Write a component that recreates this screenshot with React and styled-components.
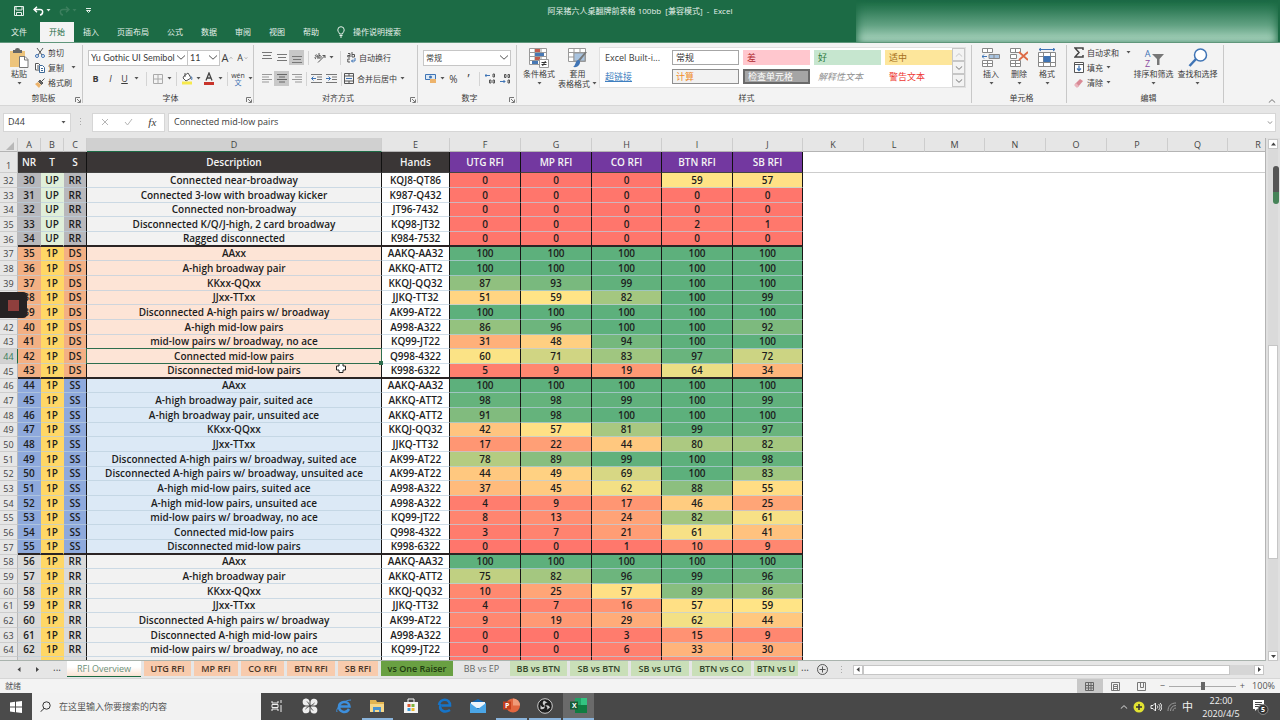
import React, { useState } from 'react';
import styled, { createGlobalStyle, css } from 'styled-components';

const GlobalStyle = createGlobalStyle`
    * {
        box-sizing: border-box;
    }
    body {
        margin: 0;
        overflow: hidden;
        font-family: 'Open Sans', 'Noto Sans CJK SC', sans-serif;
        font-size: 8px;
        line-height: 12px;
        color: #3b3b3b;
    }
    button, input, select {
        font: inherit;
        color: inherit;
        margin: 0;
        padding: 0;
        border: none;
        border-radius: 0;
        background: none;
    }
    svg {
        display: block;
        flex: none;
    }
`;

const Window = styled.div`
    display: flex;
    flex-direction: column;
    height: 100vh;
    background: #e6e6e6;
`;

/* title bar and ribbon tabs */

const Header = styled.header`
    position: relative;
    background: #1c6b45;
    border-bottom: 1px solid #5f967b;
    color: #e6f1eb;
`;
const TitleBar = styled.div`
    display: grid;
    grid-template-columns: 1fr auto 1fr;
    align-items: center;
    height: 21px;
    margin-bottom: 1px;
`;
const QuickAccess = styled.div`
    display: flex;
    align-items: center;
    gap: 8px;
    padding-left: 13px;
`;
const Title = styled.h1`
    margin: 0;
    font-size: 8px;
    font-weight: 400;
    white-space: pre;
`;
const PlainButton = styled.button`
    display: flex;
    align-items: center;
    gap: 2px;
    white-space: nowrap;
`;
const TabRow = styled.nav`
    display: flex;
    height: 20px;
    padding-left: 2px;
`;
const RibbonTab = styled.button`
    display: flex;
    align-items: center;
    gap: 8px;
    padding: 0 9px;
    white-space: nowrap;
    ${p => p.$file && css`margin-right: 4px;`}
    ${p => p.$active && css`
        background: #f3f3f3;
        color: #1c6b45;
    `}
`;
const Haze = styled.div`
    position: absolute;
    top: 0;
    right: 2px;
    bottom: 0;
    width: 33%;
    background: linear-gradient(#1c6b45 2%, #2d7a55 20%, #62a283 60%, #a4d0ba 94%);
    box-shadow: inset 5px 0 8px -4px #1c6b45, inset -5px 0 8px -4px #1c6b45;
`;

/* ribbon */

const Ribbon = styled.section`
    display: flex;
    height: 63px;
    padding-top: 2px;
    background: #f3f3f3;
    border-bottom: 1px solid #d6d6d6;
`;
const Group = styled.div`
    display: flex;
    flex-direction: column;
    width: ${p => p.$width}px;
    padding-left: ${p => p.$pad || 5}px;
    border-right: 1px solid #c8c8c8;
    margin-bottom: 2px;
    flex: none;
`;
const GroupBody = styled.div`
    display: flex;
    flex: 1;
    gap: ${p => p.$gap || 0}px;
`;
const GroupFooter = styled.div`
    display: flex;
    align-items: center;
    justify-content: center;
    height: 10px;
    position: relative;
`;
const Launcher = styled.button`
    position: absolute;
    right: 1px;
    bottom: 0;
`;
const BigButton = styled.button`
    display: flex;
    flex-direction: column;
    align-items: center;
    width: ${p => p.$width || 28}px;
    padding-top: 3px;
    line-height: 10px;
    white-space: nowrap;
    svg {
        margin-bottom: 1px;
    }
    svg + svg, span + svg {
        margin-top: 3px;
    }
`;
const Stack = styled.div`
    display: flex;
    flex-direction: column;
`;
const SmallButton = styled.button`
    display: flex;
    align-items: center;
    gap: 3px;
    height: 15px;
    white-space: nowrap;
    svg:last-child {
        margin-left: ${p => p.$caret || 0}px;
    }
`;
const ToolLine = styled.div`
    display: flex;
    align-items: center;
    height: 21px;
    margin-top: ${p => (p.$first ? 2 : 0)}px;
`;
const Tool = styled.button`
    display: flex;
    align-items: center;
    justify-content: center;
    gap: ${p => p.$gap || 3}px;
    width: ${p => p.$width || 15}px;
    height: 15px;
    font-size: ${p => p.$size || 9}px;
    white-space: nowrap;
    ${p => p.$on && css`background: #c8c8c8;`}
`;
const Phonetic = styled.span`
    display: grid;
    font-size: 7px;
    line-height: 7px;
    text-align: center;
    span + span {
        color: #3f74b5;
    }
`;
const Divider = styled.span`
    width: 1px;
    height: 14px;
    margin: 0 ${p => p.$gap || 4}px;
    background: #d4d4d4;
`;
const SelectBox = styled.label`
    display: flex;
    align-items: center;
    position: relative;
    width: ${p => p.$width}px;
    height: 16px;
    border: 1px solid #c6c6c6;
    background: #fff;
    & + & {
        margin-left: -1px;
    }
    select {
        appearance: none;
        width: 100%;
        height: 14px;
        padding: 0 12px 0 2px;
        font-family: Lato, 'Noto Sans CJK SC', sans-serif;
        font-size: ${p => p.$size || 9}px;
        line-height: 14px;
        outline: none;
    }
    svg {
        position: absolute;
        right: 1px;
        pointer-events: none;
    }
`;
const Gallery = styled.div`
    display: flex;
    height: 41px;
    margin-top: 2px;
    background: #fff;
    border: 1px solid #e1e1e1;
`;
const GalleryGrid = styled.div`
    display: grid;
    grid-template-columns: repeat(5, 67px);
    grid-auto-rows: 15px;
    gap: 4px;
    padding: 2px 0 0 1px;
`;
const StyleCell = styled.button`
    display: flex;
    align-items: center;
    padding-left: 3px;
    font-size: 9px;
    line-height: 11px;
    white-space: nowrap;
    color: ${p => p.$color || '#3b3b3b'};
    background: ${p => p.$fill || '#fff'};
    border: ${p => p.$border || '1px solid transparent'};
    font-style: ${p => (p.$italic ? 'italic' : 'normal')};
    text-decoration: ${p => (p.$link ? 'underline' : 'none')};
`;
const GalleryScroll = styled.div`
    display: grid;
    grid-template-rows: 1fr 1fr 1fr;
    width: 13px;
    button {
        display: grid;
        place-items: center;
        border: 1px solid #c6c6c6;
        background: #f3f3f3;
    }
`;
const Collapse = styled.button`
    margin: auto 4px 0 auto;
    padding-bottom: 2px;
`;

/* formula bar */

const FormulaBar = styled.div`
    display: flex;
    align-items: center;
    height: 32px;
    padding: 0 4px 0 3px;
`;
const NameBox = styled.label`
    display: flex;
    align-items: center;
    width: 68px;
    height: 19px;
    padding: 0 4px;
    background: #fff;
    border: 1px solid #d6d6d6;
    font-size: 9px;
    input {
        flex: 1;
        width: 0;
        outline: none;
    }
`;
const FormulaTools = styled.div`
    display: flex;
    align-items: center;
    justify-content: space-around;
    width: 73px;
    height: 19px;
    margin: 0 3px 0 9px;
    background: #fff;
    border: 1px solid #d6d6d6;
`;
const FunctionMark = styled.i`
    font-family: 'Liberation Serif', serif;
    font-size: 11px;
`;
const FormulaBox = styled(NameBox)`
    flex: 1;
    width: auto;
    padding: 0 2px 0 5px;
`;

/* sheet */

const SheetArea = styled.div`
    display: flex;
    flex: 1;
    min-height: 0;
`;
const SheetView = styled.main`
    flex: 1;
    min-width: 0;
    overflow: hidden;
    position: relative;
    background: #fff;
    border-right: 1px solid #b4b4b4;
    border-bottom: 1px solid #a9b3ad;
`;
const Grid = styled.table`
    table-layout: fixed;
    width: 1px;
    border-collapse: separate;
    border-spacing: 0;
    font-size: 10px;
    font-weight: 600;
    line-height: 13px;
    text-align: center;
    color: #1d1d1d;
    th, td {
        padding: 0;
        white-space: nowrap;
    }
    tbody tr {
        height: 15px;
    }
    tbody tr:nth-child(3n) {
        height: 14px;
    }
`;
const ColumnHead = styled.th`
    height: 14px;
    font-size: 9px;
    font-weight: 400;
    line-height: 13px;
    color: #444;
    background: ${p => (p.$selected ? '#d0d0d0' : '#e6e6e6')};
    border-right: 1px solid #cdcdcd;
    border-bottom: 1px solid ${p => (p.$selected ? '#1c6b45' : '#b4b4b4')};
`;
const RowHead = styled.th`
    font-size: 9px;
    font-weight: 400;
    color: ${p => (p.$selected ? '#3b7d5b' : '#444')};
    background: ${p => (p.$selected ? '#d2d2d2' : '#e6e6e6')};
    border-right: 1px solid ${p => (p.$selected ? '#1c6b45' : '#b9b9b9')};
    border-bottom: 1px solid #cdcdcd;
    vertical-align: ${p => (p.$frozen ? 'bottom' : 'middle')};
`;
const TitleCell = styled.td`
    height: 21px;
    color: #f4f4f4;
    background: ${p => p.$fill};
    border-right: 1px solid ${p => (p.$line ? '#111' : p.$fill)};
    border-bottom: 1px solid #444;
`;
const BlankTitle = styled.td`
    border-bottom: 1px solid #cdcdcd;
`;
const Cell = styled.td`
    position: relative;
    background: ${p => p.$fill};
    border-right: 1px solid ${p => (p.$line ? '#161616' : p.$fill)};
    border-bottom: ${p => (p.$last ? '2px solid #2b2424' : '1px solid rgba(186, 206, 222, 0.7)')};
`;
const Selection = styled.span`
    position: absolute;
    z-index: 1;
    inset: -1px;
    border: 1px solid #2e6e4e;
    &::after {
        content: '';
        position: absolute;
        right: -2px;
        bottom: -2px;
        width: 4px;
        height: 4px;
        background: #2e6e4e;
    }
`;
const Pointer = styled.svg`
    position: absolute;
    left: 335px;
    top: 224px;
`;
const Recorder = styled.button`
    position: absolute;
    left: 0;
    top: 292px;
    display: flex;
    align-items: center;
    padding-left: 8px;
    width: 27px;
    height: 26px;
    background: #262223;
    border-radius: 0 4px 4px 0;
    &::before {
        content: '';
        width: 11px;
        height: 11px;
        background: #8f3f3d;
    }
`;
const VScroll = styled.div`
    display: flex;
    flex-direction: column;
    width: 14px;
    padding: 1px 2px 0;
    background: #e0e0e0;
    position: relative;
`;
const ScrollButton = styled.button`
    display: grid;
    place-items: center;
    flex: none;
    width: 10px;
    height: 10px;
    background: #fff;
    border: 1px solid #c6c6c6;
`;
const VTrack = styled.div`
    display: grid;
    grid-template-rows: 196px 214px;
    flex: 1;
    background: #dadada;
    &::after {
        content: '';
        grid-row: 2;
        background: #fff;
        border: 1px solid #c6c6c6;
    }
`;
const Meter = styled.span`
    position: absolute;
    right: 1px;
    top: 28px;
    width: 6px;
    height: 38px;
    border-radius: 3px;
    background: linear-gradient(#555 68%, #468358 68%);
`;

/* sheet tabs */

const SheetBar = styled.div`
    display: flex;
    align-items: center;
    height: 18px;
    border-bottom: 1px solid #d6d6d6;
    color: #444;
`;
const SheetNav = styled.div`
    display: flex;
    align-items: center;
    justify-content: space-between;
    width: 67px;
    padding: 0 6px 0 17px;
`;
const Dots = styled.button`
    font-size: 10px;
    line-height: 6px;
    padding-bottom: 6px;
`;
const SheetTabs = styled.div`
    display: flex;
    gap: 3px;
    width: 728px;
    height: 17px;
`;
const SheetTab = styled.button`
    flex: none;
    width: ${p => p.$width}px;
    height: 15px;
    font-size: 9px;
    font-weight: ${p => (p.$active || !p.$fill ? 400 : 600)};
    line-height: 14px;
    color: ${p => p.$color || '#4a3527'};
    background: ${p => p.$fill || 'transparent'};
    white-space: nowrap;
    ${p => p.$active && css`
        height: 16px;
        background: linear-gradient(#fff 40%, #fbe3d3);
        border-bottom: 1px solid #1c6b45;
    `}
`;
const SheetExtras = styled.div`
    display: flex;
    align-items: center;
    gap: 8px;
    width: 58px;
    padding-left: 6px;
`;
const HScroll = styled.div`
    display: flex;
    align-items: center;
    flex: 1;
    margin-right: 16px;
    background: #d6d6d6;
`;
const HThumb = styled.div`
    flex: 1;
    height: 10px;
    margin-right: 24px;
    background: #fff;
    border: 1px solid #c6c6c6;
`;

const StatusBar = styled.footer`
    display: flex;
    align-items: center;
    height: 14px;
    padding: 0 5px;
    background: #f3f3f3;
    color: #555;
`;
const ViewButton = styled.button`
    display: grid;
    place-items: center;
    width: 26px;
    height: 14px;
    background: ${p => (p.$on ? '#c8c8c8' : 'none')};
    ${p => p.$push && css`margin-left: auto;`}
`;
const Zoom = styled.label`
    display: flex;
    align-items: center;
    gap: 4px;
    margin-left: 5px;
    font-size: 9px;
    input {
        appearance: none;
        width: 67px;
        height: 8px;
        background: linear-gradient(#ababab, #ababab) center / 100% 1px no-repeat;
    }
    input::-webkit-slider-thumb {
        appearance: none;
        width: 4px;
        height: 8px;
        background: #666;
    }
`;
const Percent = styled.span`
    width: 26px;
    text-align: right;
`;

/* taskbar */

const Taskbar = styled.footer`
    display: flex;
    height: 27px;
    background: #484848;
    color: #f2f2f2;
`;
const StartButton = styled.button`
    display: grid;
    place-items: center;
    width: 32px;
    background: #4b4b4b;
`;
const SearchBox = styled.label`
    display: flex;
    align-items: center;
    gap: 8px;
    width: 229px;
    padding-left: 8px;
    background: #f2f2f2;
    color: #444;
    font-size: 9px;
    input {
        flex: 1;
        outline: none;
    }
    input::placeholder {
        color: #555;
        opacity: 1;
    }
`;
const Apps = styled.div`
    display: grid;
    grid-template-columns: repeat(10, 1fr);
    width: 335px;
    margin-right: auto;
`;
const AppButton = styled.button`
    display: grid;
    place-items: center;
    margin-right: 2px;
    border-bottom: 2px solid ${p => (p.$open ? '#8ab4dc' : 'transparent')};
    background: ${p => (p.$active ? '#6a6a6a' : 'none')};
`;
const Tray = styled.div`
    display: flex;
    align-items: center;
    gap: 5px;
    padding-right: 11px;
    font-size: 11px;
`;
const Clock = styled.time`
    width: 46px;
    margin-right: 3px;
    font-size: 9px;
    line-height: 13px;
    text-align: center;
    white-space: pre-line;
`;

/* icons */

const Icon = ({ w = 14, h = w, vw = w, vh = h, stroke = '#555', fill = 'none', children }) => (
    <svg width={w} height={h} viewBox={`0 0 ${vw} ${vh}`} fill={fill} stroke={stroke} strokeWidth="1">{children}</svg>
);
const Caret = ({ color = '#555' }) => <Icon w={5} h={3} stroke="none" fill={color}><path d="M.5 0h4L2.500 2.500z" /></Icon>;
const Chevron = ({ up, w = 10, color }) => (
    <Icon w={w} h={w / 2} vw={10} vh={5} stroke={color}><path d={up ? 'M1 4.500 5 .8l4 3.700' : 'M1 .5l4 3.700L9 .5'} /></Icon>
);
const LaunchIcon = () => <Icon w={6} stroke="#777"><path d="M.5 5V.5H5M2 2l3 3M5.500 2.500v3h-3" /></Icon>;
const SaveIcon = () => <Icon w={12} h={12} stroke="#e6f1eb"><path d="M1.500 1.500h9v9h-9zM3 1.500v3.500h6V1.500M3.500 10.500v-3h5v3" /></Icon>;
const UndoIcon = ({ flip }) => (
    <svg width="11" height="10" viewBox="0 0 11 10" fill="none" stroke={flip ? '#3c7f5e' : '#fff'} strokeWidth="1.5">
        <path d={flip ? 'M7 .8l3 2.700-3 2.700M10 3.500H4C0 3.500 1 8.500 4 9' : 'M4 .8 1 3.500l3 2.700M1 3.500h6c4 0 3 5 0 5.500'} />
    </svg>
);
const BulbIcon = () => <Icon w={8} h={12} stroke="#e6f1eb"><path d="M2.500 8C2.500 6.500.8 6 .8 3.900a3.200 3.200 0 0 1 6.400 0C7.200 6 5.500 6.500 5.500 8zM2.500 9.500h3M3 11h2" /></Icon>;
const PasteIcon = () => (
    <Icon w={20} h={20} stroke="none">
        <path d="M1 3h15v16H1z" fill="#edc47c" /><path d="M4 2h2a2.500 2 0 0 1 5 0h2v3H4z" fill="#666" />
        <path d="M10.500 8.500h5.500l3 3v8h-8.500z" fill="#fff" stroke="#777" /><path d="M15.500 8.500v3.500H19" stroke="#777" fill="none" />
    </Icon>
);
const CutIcon = () => (
    <Icon w={10} h={10}><path d="M2 0l5 7M8 0L3 7" /><circle cx="2" cy="8" r="1.500" stroke="#3f74b5" /><circle cx="8" cy="8" r="1.500" stroke="#3f74b5" /></Icon>
);
const CopyIcon = () => <Icon w={10} h={10}><path d="M.5.5h3l2 2V7h-5zM2 3h2M2 5h2" fill="#fff" /><path d="M4.500 2.500h3l2 2v5h-5zM6 5.500h2M6 7.500h2" fill="#fff" stroke="#3f6a98" /></Icon>;
const BrushIcon = () => <Icon w={10} h={10}><path d="M0 6l3-2 3 3-2 3z" fill="#edb36b" stroke="none" /><path d="M3.500 3.500l3 3L8 5 5 2zM6.500 3.500L9.500.5" fill="#666" /></Icon>;
const BordersIcon = () => <Icon w={10} h={10} stroke="#aaa"><path d="M.5.5h9v9h-9zM5 .5v9M.5 5h9" /></Icon>;
const FillIcon = () => (
    <Icon w={12} h={13}><path d="M3 4l4-3 3 5-5 3-3-3zM4 1v4" fill="#fff" /><path d="M9.500 4c2 1 1.500 3 1 4" stroke="#3f74b5" /><path d="M1 9.500h10v3H1z" fill="#f7e94c" stroke="none" /></Icon>
);
const ColorIcon = () => <Icon w={12} h={13}><path d="M3 8.500L6 1l3 7.500M4 6h4" stroke="#444" strokeWidth="1.300" /><path d="M1 10h10v3H1z" fill="#c8342b" stroke="none" /></Icon>;
const AlignIcon = ({ kind = 'left', dim }) => {
    const x = { left: 0, center: 2, right: 3 }[kind];
    return <Icon w={10} h={9} stroke={dim ? '#999' : '#666'}><path d={`M0 .5h10M${x} 3h${kind === 'center' ? 6 : 7}M0 5.500h10M${x} 8h${kind === 'center' ? 6 : 7}`} /></Icon>;
};
const BarsIcon = ({ shift = 0 }) => <Icon w={10} h={12} stroke="#777"><path d={`M0 ${shift + 0.5}h10M1 ${shift + 3.5}h8M0 ${shift + 6.5}h10`} /></Icon>;
const OrientIcon = () => <Icon w={12} h={11}><path d="M1 4c1-2 3-1 3 1v2M4 5c-3-1-4 1-2 2M5 1v5c3 1 3-3 0-2.500M4 10.500L11 3.500M11 3.500v2.500M11 3.500H8.500" /></Icon>;
const IndentIcon = ({ flip }) => <Icon w={11} h={9} stroke="#777"><path d="M0 .5h11M6 3h5M6 5.500h5M0 8.500h11" /><path d={flip ? 'M0 4.500h4.500M2.500 2.500l2 2-2 2' : 'M5 4.500H.5M2.500 2.500l-2 2 2 2'} stroke="#3f74b5" /></Icon>;
const WrapIcon = () => <Icon w={9} h={11}><path d="M.5 3.500h2.500v-2H1M3 3.500v1.500H.8v-1.500M5 0v5h2.500V2.500H5M3 7H.8v3H3" /><path d="M8 6v3H4.500M6 7.500L4.500 9 6 10.500" stroke="#3f74b5" /></Icon>;
const MergeIcon = () => <Icon w={10} h={11}><path d="M.5.5h9v10h-9zM.5 3h9M.5 8h9M5 .5V3M5 8v2.500" /><path d="M2 5.500h6" stroke="#3f74b5" /></Icon>;
const MoneyIcon = () => <Icon w={12} h={11} stroke="none"><path d="M.5 1.500h10v5H.5z" fill="#dce9f5" stroke="#3f74b5" /><circle cx="5.500" cy="4" r="1.500" fill="#3f74b5" /><path d="M5 6h6v4H5z" fill="#edb36b" /></Icon>;
const DecimalIcon = ({ flip }) => (
    <Icon w={11} h={11}><path d={flip ? 'M0 8.500h5M3.500 7l1.500 1.500L3.500 10' : 'M0 2.500h5M1.500 1L0 2.500 1.500 4'} stroke="#3f74b5" /><path d={flip ? 'M4.500 1.500h1.500v3H4.500zM8 1.500h1.500v3H8zM8 7h1.500v3H8z' : 'M8 1h1.500v3H8zM4.500 7H6v3H4.500zM8 7h1.500v3H8z'} /></Icon>
);
const CondIcon = () => (
    <Icon w={20} h={20} stroke="#999"><path d="M.5.5h17v16H.5zM.5 4.500h17M.5 8.500h17M.5 12.500h17M6 .5v16M12 .5v16" fill="#fff" />
        <path d="M6 1h5v3H6zM6 9h5v3H6z" fill="#c25b4c" stroke="none" /><path d="M6 5h9v3H6zM3 13h6v3H3z" fill="#4778b4" stroke="none" />
        <path d="M10.500 11.500h9v8h-9z" fill="#fff" /><path d="M12.500 14.500h5M12.500 16.500h5M16.500 13l-3 5" stroke="#333" /></Icon>
);
const TableIcon = () => (
    <Icon w={20} h={20} stroke="#999"><path d="M.5.5h17v13H.5zM.5 4.500h17M.5 9h17M6 .5v13M12 .5v13" fill="#fff" /><path d="M6 5h11v8H6z" fill="#a8c3df" />
        <path d="M19 4l-7 9-2-1 7-8z" fill="#777" stroke="none" /><path d="M10 12c2 0 3 2 1 5-2 3-5 2-6 2 3-2 2-6 5-7z" fill="#3f74b5" stroke="none" /></Icon>
);
const CellsIcon = ({ kind }) => (
    <Icon w={18} h={20} stroke="#888">
        {kind === 'format' ? (
            <><path d="M.5 4.500h17v14H.5zM.5 8.500h17M.5 14.500h17M5.500 4.500v14M12.500 4.500v14" fill="#fff" /><path d="M5.500 8h7v6h-7z" fill="#3f74b5" stroke="none" /><path d="M1 1.500h16M3 0L1 1.500 3 3M15 0l2 1.500L15 3" stroke="#3f74b5" /></>
        ) : (
            <><path d="M.5.500h10v4H.5zM5.500.5v4M.5 12.500h10v6H.5zM5.500 12.500v6M.5 15.500h10" fill="#fff" />
                {kind === 'insert' ? <><path d="M7 6.500h10.500v4H7zM12 6.500v4" fill="#a8c3df" /><path d="M5 8.500H0M2 6.500l-2 2 2 2" stroke="#3f74b5" /></> : <><path d="M.5 6.500h6v4h-6z" fill="#fff" /><path d="M9 4l9 8M18 4l-9 8" stroke="#dd6a45" strokeWidth="1.800" /></>}</>
        )}
    </Icon>
);
const SumIcon = () => <Icon w={10} h={11} stroke="#444"><path d="M9 3V1H1l4 4.500L1 10h8V8" strokeWidth="1.500" /></Icon>;
const FillDownIcon = () => <Icon w={10} h={11}><path d="M.5.5h9v10h-9zM.5 2.500h9" fill="#fff" /><path d="M5 3.500v5M3 6.500l2 2 2-2" stroke="#3f74b5" strokeWidth="1.300" /></Icon>;
const EraserIcon = () => <Icon w={10} h={10} stroke="none"><path d="M1 6l5-5 3 2-5 6-3-1z" fill="#d98a96" /><path d="M0 7l2-2 3 3-2 2z" fill="#e9b5bd" /></Icon>;
const SortBox = styled.span`
    display: grid;
    grid-template-columns: 8px 12px;
    align-items: center;
    height: 21px;
    span {
        display: grid;
        font-size: 9px;
        line-height: 10px;
        color: #3f74b5;
    }
    span + span {
        color: #8a4ba0;
    }
`;
const SortIcon = () => (
    <SortBox>
        <span><span>A</span><span>Z</span></span>
        <Icon w={12} h={11} stroke="none" fill="#777"><path d="M0 0h12L7.500 5v6H5V5z" /></Icon>
    </SortBox>
);
const FindIcon = () => <Icon w={20} h={20} stroke="#3f74b5"><circle cx="12.500" cy="7" r="6" fill="#fff" strokeWidth="1.500" /><path d="M8 11l-6.500 7" strokeWidth="2.500" /></Icon>;
const Arrow = ({ dir }) => {
    const d = { left: 'M3.500 0v5L.5 2.500z', right: 'M1 0v5l3-2.500z', up: 'M0 3.500h5L2.500.5z', down: 'M0 1h5L2.500 4z' }[dir];
    return <Icon w={5} h={5} stroke="none" fill="#444"><path d={d} /></Icon>;
};

/* data */

const COLUMNS = [
    ['A', 23], ['B', 23], ['C', 23], ['D', 295], ['E', 68], ['F', 71], ['G', 71], ['H', 70], ['I', 71], ['J', 70],
    ['K', 61], ['L', 61], ['M', 60], ['N', 61], ['O', 61], ['P', 61], ['Q', 60], ['R', 61], ['S', 61], ['T', 61], ['U', 61], ['V', 61],
    ['W', 61], ['X', 61], ['Y', 61], ['Z', 61],
];

const THEMES = {
    UP: { a: '#b8b8bc', b: '#e0efda', c: '#b8b8bc', d: '#f2f2f2' },
    DS: { a: '#f3b084', b: '#ffd766', c: '#f3b084', d: '#fde4d6' },
    SS: { a: '#8ea9dc', b: '#ffd766', c: '#8ea9dc', d: '#dce9f6' },
    RR: { a: '#dadada', b: '#ffd766', c: '#dadada', d: '#f2f2f2' },
};

const ROWS = [
    ['UP', 'RR', 'Connected near-broadway', 'KQJ8-QT86', 0, 0, 0, 59, 57],
    ['UP', 'RR', 'Connected 3-low with broadway kicker', 'K987-Q432', 0, 0, 0, 0, 0],
    ['UP', 'RR', 'Connected non-broadway', 'JT96-7432', 0, 0, 0, 0, 0],
    ['UP', 'RR', 'Disconnected K/Q/J-high, 2 card broadway', 'KQ98-JT32', 0, 0, 0, 2, 1],
    ['UP', 'RR', 'Ragged disconnected', 'K984-7532', 0, 0, 0, 0, 0],
    ['1P', 'DS', 'AAxx', 'AAKQ-AA32', 100, 100, 100, 100, 100],
    ['1P', 'DS', 'A-high broadway pair', 'AKKQ-ATT2', 100, 100, 100, 100, 100],
    ['1P', 'DS', 'KKxx-QQxx', 'KKQJ-QQ32', 87, 93, 99, 100, 100],
    ['1P', 'DS', 'JJxx-TTxx', 'JJKQ-TT32', 51, 59, 82, 100, 99],
    ['1P', 'DS', 'Disconnected A-high pairs w/ broadway', 'AK99-AT22', 100, 100, 100, 100, 100],
    ['1P', 'DS', 'A-high mid-low pairs', 'A998-A322', 86, 96, 100, 100, 92],
    ['1P', 'DS', 'mid-low pairs w/ broadway, no ace', 'KQ99-JT22', 31, 48, 94, 100, 100],
    ['1P', 'DS', 'Connected mid-low pairs', 'Q998-4322', 60, 71, 83, 97, 72],
    ['1P', 'DS', 'Disconnected mid-low pairs', 'K998-6322', 5, 9, 19, 64, 34],
    ['1P', 'SS', 'AAxx', 'AAKQ-AA32', 100, 100, 100, 100, 100],
    ['1P', 'SS', 'A-high broadway pair, suited ace', 'AKKQ-ATT2', 98, 98, 99, 100, 99],
    ['1P', 'SS', 'A-high broadway pair, unsuited ace', 'AKKQ-ATT2', 91, 98, 100, 100, 100],
    ['1P', 'SS', 'KKxx-QQxx', 'KKQJ-QQ32', 42, 57, 81, 99, 97],
    ['1P', 'SS', 'JJxx-TTxx', 'JJKQ-TT32', 17, 22, 44, 80, 82],
    ['1P', 'SS', 'Disconnected A-high pairs w/ broadway, suited ace', 'AK99-AT22', 78, 89, 99, 100, 98],
    ['1P', 'SS', 'Disconnected A-high pairs w/ broadway, unsuited ace', 'AK99-AT22', 44, 49, 69, 100, 83],
    ['1P', 'SS', 'A-high mid-low pairs, suited ace', 'A998-A322', 37, 45, 62, 88, 55],
    ['1P', 'SS', 'A-high mid-low pairs, unsuited ace', 'A998-A322', 4, 9, 17, 46, 25],
    ['1P', 'SS', 'mid-low pairs w/ broadway, no ace', 'KQ99-JT22', 8, 13, 24, 82, 61],
    ['1P', 'SS', 'Connected mid-low pairs', 'Q998-4322', 3, 7, 21, 61, 41],
    ['1P', 'SS', 'Disconnected mid-low pairs', 'K998-6322', 0, 0, 1, 10, 9],
    ['1P', 'RR', 'AAxx', 'AAKQ-AA32', 100, 100, 100, 100, 100],
    ['1P', 'RR', 'A-high broadway pair', 'AKKQ-ATT2', 75, 82, 96, 99, 96],
    ['1P', 'RR', 'KKxx-QQxx', 'KKQJ-QQ32', 10, 25, 57, 89, 86],
    ['1P', 'RR', 'JJxx-TTxx', 'JJKQ-TT32', 4, 7, 16, 57, 59],
    ['1P', 'RR', 'Disconnected A-high pairs w/ broadway', 'AK99-AT22', 9, 19, 29, 62, 44],
    ['1P', 'RR', 'Disconnected A-high mid-low pairs', 'A998-A322', 0, 0, 3, 15, 9],
    ['1P', 'RR', 'mid-low pairs w/ broadway, no ace', 'KQ99-JT22', 0, 0, 6, 33, 30],
];

const SHEETS = [
    ['RFI Overview', 74], ['UTG RFI', 47, '#f8cbad'], ['MP RFI', 44, '#f8cbad'], ['CO RFI', 43, '#f8cbad'],
    ['BTN RFI', 48, '#f8cbad'], ['SB RFI', 40, '#f8cbad'], ['vs One Raiser', 72, '#69a042', '#1e3a10'],
    ['BB vs EP', 51, '', '#666'], ['BB vs BTN', 57, '#c9dfb8', '#33452a'], ['SB vs BTN', 58, '#c9dfb8', '#33452a'],
    ['SB vs UTG', 58, '#c9dfb8', '#33452a'], ['BTN vs CO', 59, '#c9dfb8', '#33452a'], ['BTN vs U', 44, '#c9dfb8', '#33452a'],
];

// three point colour scale: red 0, yellow 59, green 100
const LOW = [255, 118, 108];
const MID = [255, 228, 134];
const HIGH = [93, 176, 124];
const heat = (n) => {
    const [from, to, t] = n < 59 ? [LOW, MID, n / 59] : [MID, HIGH, (n - 59) / 41];
    return `rgb(${from.map((c, i) => Math.round(c + (to[i] - c) * t)).join(', ')})`;
};

const SheetGrid = () => (
    <Grid>
        <colgroup>
            <col style={{ width: 18 }} />
            {COLUMNS.map(([name, width]) => <col key={name} style={{ width }} />)}
        </colgroup>
        <thead>
            <tr>
                <ColumnHead><Icon w={16} h={12} stroke="none" fill="#b8b8b8"><path d="M14 3v8H6z" /></Icon></ColumnHead>
                {COLUMNS.map(([name]) => <ColumnHead key={name} $selected={name === 'D'}>{name}</ColumnHead>)}
            </tr>
            <tr>
                <RowHead $frozen>1</RowHead>
                {['NR', 'T', 'S', 'Description', 'Hands'].map((t, i) => <TitleCell key={t} $fill="#3a3636" $line={i > 1}>{t}</TitleCell>)}
                {['UTG RFI', 'MP RFI', 'CO RFI', 'BTN RFI', 'SB RFI'].map(t => <TitleCell key={t} $fill="#7338a0" $line>{t}</TitleCell>)}
                {COLUMNS.slice(10).map(([name]) => <BlankTitle key={name} />)}
            </tr>
        </thead>
        <tbody>
            {ROWS.map(([type, suit, text, hands, ...nums], i) => {
                const theme = THEMES[type === 'UP' ? 'UP' : suit];
                const selected = i === 12;
                const last = i === 4 || i === 13 || i === 25;
                return (
                    <tr key={i}>
                        <RowHead $selected={selected}>{i + 32}</RowHead>
                        <Cell $fill={theme.a} $last={last}>{i + 30}</Cell>
                        <Cell $fill={theme.b} $last={last}>{type}</Cell>
                        <Cell $fill={theme.c} $last={last} $line>{suit}</Cell>
                        <Cell $fill={theme.d} $last={last} $line>{text}{selected && <Selection />}</Cell>
                        <Cell $fill="#fff" $last={last} $line>{hands}</Cell>
                        {nums.map((n, j) => <Cell key={j} $fill={heat(n)} $last={last} $line>{n}</Cell>)}
                    </tr>
                );
            })}
            <tr>
                <RowHead />
                {['#dadada', '#ffd766', '#dadada', '#f2f2f2', '#fff', heat(0), heat(0), heat(3), heat(12), heat(9)].map((fill, i) => (
                    <Cell key={i} $fill={fill} $line={i > 1} />
                ))}
            </tr>
        </tbody>
    </Grid>
);

const RibbonGroup = ({ label, width, pad, gap, launcher, children }) => (
    <Group $width={width} $pad={pad}>
        <GroupBody $gap={gap}>{children}</GroupBody>
        <GroupFooter>{label}{launcher && <Launcher aria-label={label}><LaunchIcon /></Launcher>}</GroupFooter>
    </Group>
);

const TASKS = [
    ['任务视图', <Icon w={12} h={12} stroke="#eee"><path d="M1 1v2h6V1M1 4.500h6v3H1zM1 11V9h6v2M10 0v3M10 5v7" /></Icon>],
    ['应用', <Icon w={16} h={16} stroke="none" fill="#eee"><path d="M7.500 7.500H4A3.500 3.500 0 1 1 7.500 3zM8.500 7.500V4a3.500 3.500 0 1 1 4.500 3.500zM8.500 8.500H12A3.500 3.500 0 1 1 8.500 13zM7.500 8.500V12a3.500 3.500 0 1 1-4.500-3.500z" /><path d="M5 3.500c1 1 2 2 3 4.500M12.500 5c-1 1-2 2-4.500 3M11 12.500c-1-1-2-2-3-4.500M3.500 11c1-1 2-2 4.500-3" fill="none" stroke="#484848" /></Icon>],
    ['Internet Explorer', <Icon w={18} h={16} stroke="#3d8fdc"><path d="M14 11c-3 5-10 3-10-2.500S14 2 14.500 8.500H5" strokeWidth="2.500" /><path d="M2 14C0 11 8 2 16 2" strokeWidth="1" /></Icon>],
    ['文件资源管理器', <Icon w={16} h={14} stroke="none"><path d="M1 1h6l1 2h7v10H1z" fill="#e3b552" /><path d="M1 5h14v8H1z" fill="#f6d88a" /><path d="M4 8h8v5h-2v-2H6v2H4z" fill="#4a93d0" /></Icon>, true],
    ['Microsoft Store', <Icon w={16} h={16} stroke="none"><path d="M1 4h14v11H1z" fill="#f4f4f4" /><path d="M5 4V1h6v3" stroke="#f4f4f4" fill="none" /><path d="M4.500 6h3v3h-3z" fill="#e0592f" /><path d="M8.500 6h3v3h-3z" fill="#7fb43c" /><path d="M4.500 10h3v3h-3z" fill="#3a9ad9" /><path d="M8.500 10h3v3h-3z" fill="#f0b92c" /></Icon>],
    ['Edge', <Icon w={15} h={15} stroke="#1674c8"><path d="M2 7C3 0 13 0 13 7.500H5M4 6c-3 7 4 9 9 6" strokeWidth="2.600" /></Icon>],
    ['邮件', <Icon w={16} h={14} stroke="none"><path d="M0 4l8-4 8 4v10H0z" fill="#1267b4" /><path d="M1 3h14v6H1z" fill="#eef5fb" /><path d="M0 4l8 6 8-6v10H0z" fill="#4ba6e6" /></Icon>],
    ['PowerPoint', <Icon w={17} h={15} stroke="none"><circle cx="10" cy="7.500" r="7" fill="#e2663f" /><path d="M10 .5a7 7 0 0 1 7 7h-7z" fill="#f09a78" /><path d="M0 3.500h8v8H0z" fill="#c43e1c" /><text x="2" y="10" fontSize="7" fontWeight="700" fill="#fff">P</text></Icon>, true],
    ['OBS', <Icon w={16} h={16} stroke="none"><circle cx="8" cy="8" r="7.300" fill="#1e1e1e" stroke="#ccc" /><path d="M7 2.500c-2 2-1.500 4.500 1 5.500-1-2 1-4 3-3M13 9.500c-1-2.500-3.500-3-5-1.500 2.500 0 3 2.500 1.500 4M3.500 11c2.500 1 4.500-.5 4.500-3-1.500 2-4 1-4.500-1.500" fill="#ccc" /></Icon>, true],
    ['Excel', <Icon w={17} h={15} stroke="none"><path d="M5 0h12v15H5z" fill="#21a366" /><path d="M5 7h12v8H5z" fill="#107c41" /><path d="M11 0h6v7h-6z" fill="#33c481" /><path d="M0 3.500h8v8H0z" fill="#185c37" /><text x="2" y="10" fontSize="7" fontWeight="700" fill="#fff">X</text></Icon>, true, true],
];

const App = () => {
    const [cell, setCell] = useState('D44');
    const [value, setValue] = useState('Connected mid-low pairs');
    const [zoom, setZoom] = useState(100);

    return (
        <Window>
            <GlobalStyle />
            <Header>
                <TitleBar>
                    <QuickAccess>
                        <PlainButton aria-label="保存"><SaveIcon /></PlainButton>
                        <PlainButton aria-label="撤消"><UndoIcon /><Caret color="#e6f1eb" /></PlainButton>
                        <PlainButton aria-label="恢复"><UndoIcon flip /><Caret color="#3c7f5e" /></PlainButton>
                        <PlainButton aria-label="自定义"><Icon w={7} h={6} stroke="#e6f1eb"><path d="M1 .5h5M1.500 2.500h4l-2 2z" /></Icon></PlainButton>
                    </QuickAccess>
                    <Title>阿呆猪六人桌翻牌前表格 100bb  [兼容模式]  -  Excel</Title>
                </TitleBar>
                <TabRow>
                    <RibbonTab $file>文件</RibbonTab>
                    <RibbonTab $active>开始</RibbonTab>
                    {['插入', '页面布局', '公式', '数据', '审阅', '视图', '帮助'].map(t => <RibbonTab key={t}>{t}</RibbonTab>)}
                    <RibbonTab><BulbIcon />操作说明搜索</RibbonTab>
                </TabRow>
                <Haze />
            </Header>

            <Ribbon>
                <RibbonGroup label="剪贴板" width={83} gap={2} launcher>
                    <BigButton><PasteIcon /><span>粘贴</span><Caret /></BigButton>
                    <Stack>
                        <SmallButton><CutIcon />剪切</SmallButton>
                        <SmallButton $caret={4}><CopyIcon />复制<Caret /></SmallButton>
                        <SmallButton><BrushIcon />格式刷</SmallButton>
                    </Stack>
                </RibbonGroup>
                <RibbonGroup label="字体" width={171} launcher>
                    <Stack>
                        <ToolLine $first>
                            <SelectBox $width={100}>
                                <select aria-label="字体"><option>Yu Gothic UI Semibol</option></select><Chevron />
                            </SelectBox>
                            <SelectBox $width={33}>
                                <select aria-label="字号"><option>11</option></select><Chevron />
                            </SelectBox>
                            <Tool $size={11} $gap={1}>A<Chevron up w={4} /></Tool>
                            <Tool $gap={1}>A<Chevron w={4} /></Tool>
                        </ToolLine>
                        <ToolLine>
                            <Tool><b>B</b></Tool>
                            <Tool><i>I</i></Tool>
                            <Tool $width={24} $gap={6}><u>U</u><Caret /></Tool>
                            <Divider />
                            <Tool $width={22} $gap={4}><BordersIcon /><Caret /></Tool>
                            <Divider $gap={3} />
                            <Tool $width={22}><FillIcon /><Caret /></Tool>
                            <Tool $width={22}><ColorIcon /><Caret /></Tool>
                            <Divider $gap={3} />
                            <Tool $width={22}>
                                <Phonetic><span>wén</span><span>文</span></Phonetic>
                                <Caret />
                            </Tool>
                        </ToolLine>
                    </Stack>
                </RibbonGroup>
                <RibbonGroup label="对齐方式" width={164} launcher>
                    <Stack>
                        <ToolLine $first>
                            <Tool><BarsIcon /></Tool>
                            <Tool><BarsIcon shift={2} /></Tool>
                            <Tool $on><BarsIcon shift={4} /></Tool>
                            <Divider />
                            <Tool $width={22}><OrientIcon /><Caret /></Tool>
                            <Divider $gap={5} />
                            <Tool $width={46} $size={8}><WrapIcon />自动换行</Tool>
                        </ToolLine>
                        <ToolLine>
                            <Tool><AlignIcon dim /></Tool>
                            <Tool $on><AlignIcon kind="center" /></Tool>
                            <Tool><AlignIcon kind="right" dim /></Tool>
                            <Divider $gap={2} />
                            <Tool><IndentIcon /></Tool>
                            <Tool><IndentIcon flip /></Tool>
                            <Divider $gap={2} />
                            <Tool $width={61} $size={8}><MergeIcon />合并后居中<Caret /></Tool>
                        </ToolLine>
                    </Stack>
                </RibbonGroup>
                <RibbonGroup label="数字" width={99} launcher>
                    <Stack>
                        <ToolLine $first>
                            <SelectBox $width={88} $size={8}>
                                <select aria-label="数字格式"><option>常规</option></select><Chevron />
                            </SelectBox>
                        </ToolLine>
                        <ToolLine>
                            <Tool $width={23}><MoneyIcon /><Caret /></Tool>
                            <Tool $size={10}>%</Tool>
                            <Tool $size={12}>’</Tool>
                            <Divider $gap={3} />
                            <Tool><DecimalIcon /></Tool>
                            <Tool><DecimalIcon flip /></Tool>
                        </ToolLine>
                    </Stack>
                </RibbonGroup>
                <RibbonGroup label="样式" width={455}>
                    <BigButton $width={34}><CondIcon /><span>条件格式</span><Caret /></BigButton>
                    <BigButton $width={43}><TableIcon /><span>套用</span><PlainButton as="span">表格格式<Caret /></PlainButton></BigButton>
                    <Gallery>
                        <GalleryGrid>
                            <StyleCell>Excel Built-i...</StyleCell>
                            <StyleCell $border="1px solid #a6a6a6">常规</StyleCell>
                            <StyleCell $fill="#ffc7ce" $color="#b02a2f">差</StyleCell>
                            <StyleCell $fill="#c6e6cf" $color="#2c7a3c">好</StyleCell>
                            <StyleCell $fill="#fde69b" $color="#a5701a">适中</StyleCell>
                            <StyleCell $color="#3f7fc0" $link>超链接</StyleCell>
                            <StyleCell $fill="#f2f2f2" $color="#f08a28" $border="1px solid #8f8f8f">计算</StyleCell>
                            <StyleCell $fill="#a5a5a5" $color="#fff" $border="2px solid #6a6a6a">检查单元格</StyleCell>
                            <StyleCell $color="#8f8f8f" $italic>解释性文本</StyleCell>
                            <StyleCell $color="#ee3a34">警告文本</StyleCell>
                        </GalleryGrid>
                        <GalleryScroll>
                            <button aria-label="上移"><Chevron up w={8} color="#bbb" /></button>
                            <button aria-label="下移"><Chevron w={8} /></button>
                            <button aria-label="更多"><Chevron w={8} /></button>
                        </GalleryScroll>
                    </Gallery>
                </RibbonGroup>
                <RibbonGroup label="单元格" width={95}>
                    <BigButton><CellsIcon kind="insert" /><span>插入</span><Caret /></BigButton>
                    <BigButton><CellsIcon /><span>删除</span><Caret /></BigButton>
                    <BigButton><CellsIcon kind="format" /><span>格式</span><Caret /></BigButton>
                </RibbonGroup>
                <RibbonGroup label="编辑" width={157} pad={7} gap={1}>
                    <Stack>
                        <SmallButton $caret={4}><SumIcon />自动求和<Caret /></SmallButton>
                        <SmallButton><FillDownIcon />填充<Caret /></SmallButton>
                        <SmallButton><EraserIcon />清除<Caret /></SmallButton>
                    </Stack>
                    <BigButton $width={43}><SortIcon /><span>排序和筛选</span><Caret /></BigButton>
                    <BigButton $width={43}><FindIcon /><span>查找和选择</span><Caret /></BigButton>
                </RibbonGroup>
                <Collapse aria-label="折叠功能区"><Chevron up w={8} /></Collapse>
            </Ribbon>

            <FormulaBar>
                <NameBox>
                    <input aria-label="名称框" value={cell} onChange={e => setCell(e.target.value)} /><Caret />
                </NameBox>
                <Icon w={12} h={10} stroke="none" fill="#aaa"><path d="M9 1h1v1H9zM9 4h1v1H9zM9 7h1v1H9z" /></Icon>
                <FormulaTools>
                    <PlainButton aria-label="取消"><Icon w={8} h={8} stroke="#b5b5b5"><path d="M1 1l6 6M7 1L1 7" /></Icon></PlainButton>
                    <PlainButton aria-label="输入"><Icon w={9} h={8} stroke="#b5b5b5"><path d="M1 4l2.500 3L8 1" /></Icon></PlainButton>
                    <PlainButton aria-label="插入函数"><FunctionMark>fx</FunctionMark></PlainButton>
                </FormulaTools>
                <FormulaBox>
                    <input aria-label="编辑栏" value={value} onChange={e => setValue(e.target.value)} /><Chevron w={6} />
                </FormulaBox>
            </FormulaBar>

            <SheetArea>
                <SheetView>
                    <SheetGrid />
                    <Pointer width="12" height="12" viewBox="0 0 12 12" fill="#fff" stroke="#222">
                        <path d="M4 1.500h4V4h2.500v4H8v2.500H4V8H1.500V4H4z" />
                    </Pointer>
                </SheetView>
                <VScroll>
                    <ScrollButton aria-label="向上"><Arrow dir="up" /></ScrollButton>
                    <VTrack />
                    <ScrollButton aria-label="向下"><Arrow dir="down" /></ScrollButton>
                    <Meter />
                </VScroll>
            </SheetArea>

            <SheetBar>
                <SheetNav>
                    <PlainButton aria-label="上一个"><Arrow dir="left" /></PlainButton>
                    <PlainButton aria-label="下一个"><Arrow dir="right" /></PlainButton>
                    <Dots>...</Dots>
                </SheetNav>
                <SheetTabs>
                    {SHEETS.map(([name, width, fill, color], i) => (
                        <SheetTab key={name} $width={width} $fill={fill} $color={i ? color : '#6c9079'} $active={!i}>{name}</SheetTab>
                    ))}
                </SheetTabs>
                <SheetExtras>
                    <Dots>...</Dots>
                    <PlainButton aria-label="新工作表"><Icon w={11} h={11}><circle cx="5.500" cy="5.500" r="5" /><path d="M5.500 2.500v6M2.500 5.500h6" /></Icon></PlainButton>
                    <Icon w={12} h={10} stroke="none" fill="#aaa"><path d="M5 1h1v1H5zM5 4h1v1H5zM5 7h1v1H5z" /></Icon>
                </SheetExtras>
                <HScroll>
                    <ScrollButton aria-label="向左"><Arrow dir="left" /></ScrollButton>
                    <HThumb />
                    <ScrollButton aria-label="向右"><Arrow dir="right" /></ScrollButton>
                </HScroll>
            </SheetBar>

            <StatusBar>
                就绪
                <ViewButton $on $push aria-label="普通"><Icon w={9} h={9} stroke="#666"><path d="M.5.5h8v8h-8zM3.500.5v8M6 .5v8M.5 3.500h8M.5 6h8" /></Icon></ViewButton>
                <ViewButton aria-label="页面布局"><Icon w={9} h={9} stroke="#777"><path d="M.5.5h8v8h-8zM2.500 2.500h4v6h-4zM3 4.500h3M3 6.500h3" /></Icon></ViewButton>
                <ViewButton aria-label="分页预览"><Icon w={9} h={9} stroke="#777"><path d="M.5.5h8v8h-8zM3.500.5v5h3M6.500.5v5" /></Icon></ViewButton>
                <Zoom>
                    −
                    <input type="range" min="0" max="196" aria-label="缩放" value={zoom} onChange={e => setZoom(+e.target.value)} />
                    +
                    <Percent>{zoom}%</Percent>
                </Zoom>
            </StatusBar>

            <Taskbar>
                <StartButton aria-label="开始菜单"><Icon w={12} h={12} stroke="none" fill="#fff"><path d="M0 1.500l5-.7v4.700H0zM6 .7L12 0v5.500H6zM0 6.500h5v4.700l-5-.7zM6 6.500h6V12l-6-.7z" /></Icon></StartButton>
                <SearchBox>
                    <Icon w={11} h={11} stroke="#333"><circle cx="6.500" cy="4.500" r="3.700" /><path d="M4 7.500L.5 10.800" /></Icon>
                    <input aria-label="搜索" placeholder="在这里输入你要搜索的内容" />
                </SearchBox>
                <Apps>
                    {TASKS.map(([name, icon, open, active]) => (
                        <AppButton key={name} aria-label={name} $open={open} $active={active}>{icon}</AppButton>
                    ))}
                </Apps>
                <Tray>
                    <Chevron up w={8} color="#fff" />
                    <Icon w={12} h={12} stroke="#333"><circle cx="6" cy="6" r="5.500" fill="#e2e332" stroke="none" /><path d="M3 6h6M6 3v6" strokeWidth="1.500" /></Icon>
                    <Icon w={12} h={10} stroke="#eee"><path d="M1 3.500h2l2.500-2.500v8L3 6.500H1zM7 3.500c1 1 1 2 0 3M8.500 2c2 2 2 4 0 6M10 1c2.500 2.500 2.500 5.500 0 8" /></Icon>
                    <Icon w={10} h={10} stroke="#999"><path d="M1 9C1 4 4 1 9 1M3.500 9c0-3 2-5.500 5.500-5.500M6 9c0-2 1-3 3-3" /></Icon>
                    <span>中</span>
                    <Clock>{'22:00\n2020/4/5'}</Clock>
                    <svg width="17" height="18" viewBox="0 0 17 18">
                        <path d="M1 2h11v9H5l-2 2v-2H1z" fill="#fff" /><path d="M3 4.500h7M3 6.500h7M3 8.500h4" stroke="#484848" />
                        <circle cx="11" cy="11.500" r="5" fill="#333" stroke="#888" /><text x="9" y="14" fontSize="7" fontWeight="700" fill="#fff">5</text>
                    </svg>
                </Tray>
            </Taskbar>
            <Recorder aria-label="录制" />
        </Window>
    );
};

export default App;
